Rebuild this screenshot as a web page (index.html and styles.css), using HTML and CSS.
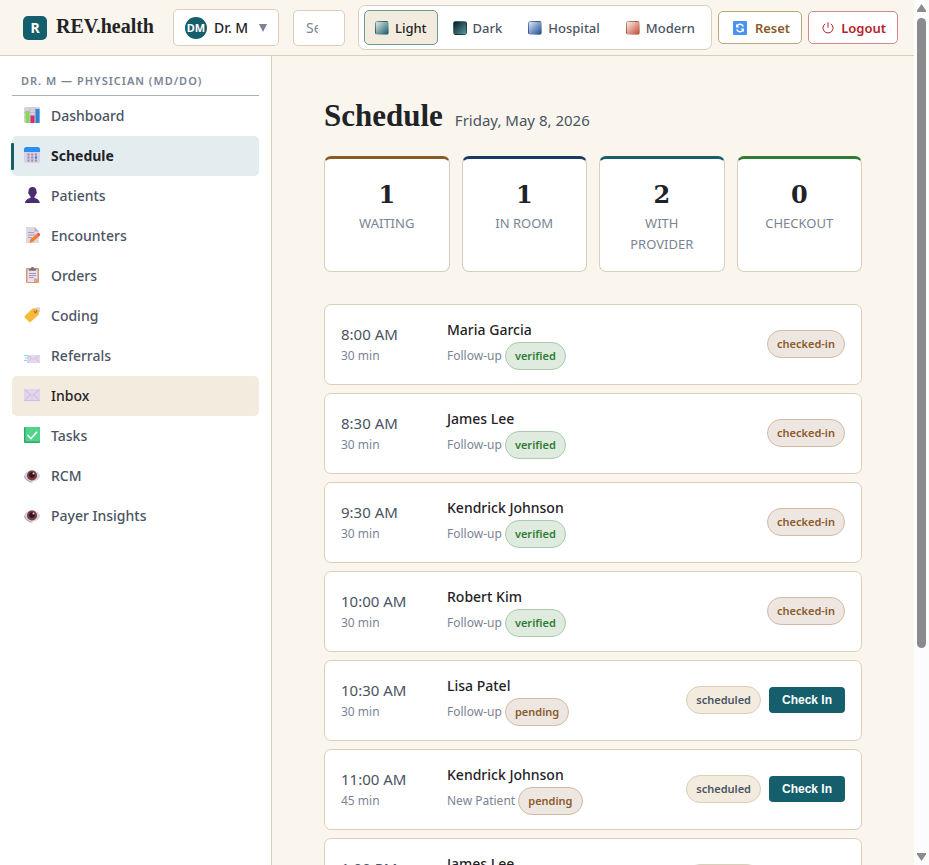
FILE: index.html
```html
<!DOCTYPE html>
<html lang="en">
<head>
    <meta charset="UTF-8">
    <meta name="viewport" content="width=device-width, initial-scale=1">
    <title>REV.health - Schedule</title>
    <link rel="stylesheet" href="styles.css">
</head>
<body>
<div class="viewport">
<div class="app">
    <header class="topbar">
        <a class="brand" href="#"><span class="brand-mark">R</span><span class="brand-name">REV.health</span></a>
        <button class="user-picker" type="button">
            <span class="avatar">DM</span>
            <span>Dr. M</span>
            <svg class="caret" width="8" height="8" viewBox="0 0 8 8"><path d="M0 0h8L4 8z" fill="#7b8494"/></svg>
        </button>
        <input class="search" type="text" placeholder="Search patients" aria-label="Search">
        <div class="themes">
            <button class="theme active" type="button"><span class="swatch light"></span>Light</button>
            <button class="theme" type="button"><span class="swatch dark"></span>Dark</button>
            <button class="theme" type="button"><span class="swatch hospital"></span>Hospital</button>
            <button class="theme" type="button"><span class="swatch modern"></span>Modern</button>
        </div>
        <div class="actions">
            <button class="action reset" type="button">
                <svg width="14" height="14" viewBox="0 0 14 14"><rect width="14" height="14" rx="1" fill="#4795ee"/><path d="M10.3 5.5A3.6 3.6 0 0 0 4 4.9M3.7 8.5a3.6 3.6 0 0 0 6.3.6" fill="none" stroke="#fff" stroke-width="1.5"/><path d="M3 3v3.4h3.4zM11 11V7.6H7.6z" fill="#fff"/></svg>
                Reset
            </button>
            <button class="action logout" type="button">
                <svg width="12" height="12" viewBox="0 0 12 12"><path d="M3.2 1.8a5 5 0 1 0 5.6 0M6 .3v5.4" fill="none" stroke="#b3222b" stroke-width="1"/></svg>
                Logout
            </button>
        </div>
    </header>

    <div class="body">
        <nav class="sidebar">
            <div class="nav-title">Dr. M — Physician (MD/DO)</div>
            <a class="nav-item" href="#">
                <svg width="16" height="16" viewBox="0 0 16 16"><rect width="16" height="16" rx="1.5" fill="#d9d0df"/><path d="M0 5.5h16M0 10.5h16M6 0v16M11 0v16" stroke="#b9afc2" stroke-width=".6"/><rect x="1.5" y="4" width="4" height="12" fill="#86d957"/><rect x="6.5" y="8.5" width="4" height="7.5" fill="#d52b6f"/><rect x="11.5" y="2" width="4" height="14" fill="#2688d9"/></svg>
                Dashboard
            </a>
            <a class="nav-item current" href="#">
                <svg width="16" height="16" viewBox="0 0 16 16"><rect width="16" height="16" rx="2.5" fill="#d8cfe6"/><path d="M0 5V2.5A2.5 2.5 0 0 1 2.5 0h11A2.5 2.5 0 0 1 16 2.5V5z" fill="#2b8ff5"/><path d="M3.5 7.5h9.5M3.5 10.5h9.5M3.5 13.5h9.5" stroke="#958ba3" stroke-width="1.8" stroke-dasharray="2 1.7"/><path d="M11 9.6h2v1.8h-2z" fill="#1b85e8"/></svg>
                Schedule
            </a>
            <a class="nav-item" href="#">
                <svg width="16" height="16" viewBox="0 0 16 16"><path d="M8.5 0c2.7 0 4 1.800 4 4.300 0 .8.5.8.3 1.6-.1.7-.6.9-.8 1.4-.3 1-.9 1.700-1.500 2.200v1.400c2.500.7 5 1.600 5.300 5.100H1c.3-3.500 3-4.400 5.500-5.100V9.500C5.900 9 5.300 8.300 5 7.300c-.2-.5-.7-.7-.8-1.400-.2-.8.3-.8.3-1.600C4.500 1.800 5.800 0 8.500 0z" fill="#4a2c75"/></svg>
                Patients
            </a>
            <a class="nav-item" href="#">
                <svg width="16" height="16" viewBox="0 0 16 16"><path d="M2 0h8.500L15 4.500V16H2z" fill="#ded8e3"/><path d="M10.500 0v4.500H15z" fill="#b8afc4"/><path d="M4 5.500h6M4 8h7M4 10.500h4" stroke="#a99fb3"/><path d="M5.500 15.700l.8-3.200 6-5.200 2.300 2.500-6 5.100z" fill="#f77c24"/><path d="M12.300 7.300l1.400-1.200c1.500-.8 3 .9 2.200 2.400l-1.300 1.300z" fill="#ed5658"/></svg>
                Encounters
            </a>
            <a class="nav-item" href="#">
                <svg width="16" height="16" viewBox="0 0 16 16"><rect x="2" y="1" width="13" height="15" rx="1" fill="#d29a70"/><path d="M3.500 2.500h10v9L10 15H3.500z" fill="#e8e0f1"/><path d="M10 15v-3.500h3.500z" fill="#b6a5c9"/><path d="M10.500 15.500l4-4V15.500z" fill="#f4a050"/><path d="M5 3.700V1.800h2C7 .5 7.500 0 8.500 0s1.500.5 1.500 1.800h2v1.900z" fill="#75717f"/><path d="M5 6.500h7M5 8.500h7M5 10.500h4.500" stroke="#a196ad"/></svg>
                Orders
            </a>
            <a class="nav-item" href="#">
                <svg width="16" height="16" viewBox="0 0 16 16"><path d="M8.500 1.500L13 1l2 2-.3 4.500-8 7.500c-.5.4-1 .4-1.500 0L.7 10.500c-.4-.5-.4-1 0-1.500z" fill="#fbb938"/><circle cx="11.500" cy="4.500" r="1.800" fill="#c96f28"/><path d="M11 4.500C11 1 15.500-.5 16 2.500c.2 1.500-1 2.500-2.500 2.500" fill="none" stroke="#cbc3dc" stroke-width="1.1"/></svg>
                Coding
            </a>
            <a class="nav-item" href="#">
                <svg width="16" height="16" viewBox="0 0 16 16"><rect x="3" y="8" width="13" height="8" rx=".5" fill="#e4d7ee"/><path d="M3.500 8.500l6 4 6-4M3.500 15.500l4-4M15.500 15.500l-4-4" fill="none" stroke="#c9b7da" stroke-width=".7"/><path d="M0 8.500h4M1 11h3M0 13.500h3" stroke="#8bdde3"/></svg>
                Referrals
            </a>
            <a class="nav-item hovered" href="#">
                <svg width="16" height="16" viewBox="0 0 16 16"><rect y="2" width="16" height="12" rx=".7" fill="#e0d3eb"/><path d="M.5 2.500L8 9l7.500-6.500M.5 13.500L6 8M15.500 13.500L10 8" fill="none" stroke="#c8b5da" stroke-width=".8"/><path d="M0 13.600h16" stroke="#cdb4e2" stroke-width=".8"/></svg>
                Inbox
            </a>
            <a class="nav-item" href="#">
                <svg width="16" height="16" viewBox="0 0 16 16"><rect width="16" height="16" rx="1" fill="#2fab69"/><rect x="1.500" width="14.500" height="14.500" rx="1" fill="#50d38a"/><path d="M3.500 8l3.500 3.500L13 4.800" fill="none" stroke="#fff" stroke-width="1.6"/></svg>
                Tasks
            </a>
            <a class="nav-item" href="#">
                <svg width="16" height="16" viewBox="0 0 16 16"><path d="M0 9c2-8 14-8 16 0-2 7.500-14 7.500-16 0z" fill="#d9d3df"/><path d="M.3 9c2 4.500 5 6 8 6" fill="none" stroke="#b6a3c9" stroke-width="1.2"/><circle cx="8" cy="8.500" r="5" fill="#7b3d3c"/><circle cx="8" cy="8" r="2.800" fill="#2d1725"/><circle cx="9.500" cy="6.500" r="1" fill="#e3cfd6"/></svg>
                RCM
            </a>
            <a class="nav-item" href="#">
                <svg width="16" height="16" viewBox="0 0 16 16"><path d="M0 9c2-8 14-8 16 0-2 7.500-14 7.500-16 0z" fill="#d9d3df"/><path d="M.3 9c2 4.500 5 6 8 6" fill="none" stroke="#b6a3c9" stroke-width="1.2"/><circle cx="8" cy="8.500" r="5" fill="#7b3d3c"/><circle cx="8" cy="8" r="2.800" fill="#2d1725"/><circle cx="9.500" cy="6.500" r="1" fill="#e3cfd6"/></svg>
                Payer Insights
            </a>
        </nav>

        <main class="content">
            <div class="page-head">
                <h1>Schedule</h1>
                <span class="date">Friday, May 8, 2026</span>
            </div>

            <section class="stats">
                <div class="stat waiting"><div class="stat-value">1</div><div class="stat-label">Waiting</div></div>
                <div class="stat in-room"><div class="stat-value">1</div><div class="stat-label">In Room</div></div>
                <div class="stat provider"><div class="stat-value">2</div><div class="stat-label">With Provider</div></div>
                <div class="stat checkout"><div class="stat-value">0</div><div class="stat-label">Checkout</div></div>
            </section>

            <section class="appointments">
                <article class="appt">
                    <div class="when"><div class="time">8:00 AM</div><div class="length">30 min</div></div>
                    <div class="who"><div class="name">Maria Garcia</div><div class="visit">Follow-up <span class="badge green">verified</span></div></div>
                    <span class="badge brown">checked-in</span>
                </article>
                <article class="appt">
                    <div class="when"><div class="time">8:30 AM</div><div class="length">30 min</div></div>
                    <div class="who"><div class="name">James Lee</div><div class="visit">Follow-up <span class="badge green">verified</span></div></div>
                    <span class="badge brown">checked-in</span>
                </article>
                <article class="appt">
                    <div class="when"><div class="time">9:30 AM</div><div class="length">30 min</div></div>
                    <div class="who"><div class="name">Kendrick Johnson</div><div class="visit">Follow-up <span class="badge green">verified</span></div></div>
                    <span class="badge brown">checked-in</span>
                </article>
                <article class="appt">
                    <div class="when"><div class="time">10:00 AM</div><div class="length">30 min</div></div>
                    <div class="who"><div class="name">Robert Kim</div><div class="visit">Follow-up <span class="badge green">verified</span></div></div>
                    <span class="badge brown">checked-in</span>
                </article>
                <article class="appt">
                    <div class="when"><div class="time">10:30 AM</div><div class="length">30 min</div></div>
                    <div class="who"><div class="name">Lisa Patel</div><div class="visit">Follow-up <span class="badge brown">pending</span></div></div>
                    <span class="badge sand">scheduled</span>
                    <button class="check-in" type="button">Check In</button>
                </article>
                <article class="appt">
                    <div class="when"><div class="time">11:00 AM</div><div class="length">45 min</div></div>
                    <div class="who"><div class="name">Kendrick Johnson</div><div class="visit">New Patient <span class="badge brown">pending</span></div></div>
                    <span class="badge sand">scheduled</span>
                    <button class="check-in" type="button">Check In</button>
                </article>
                <article class="appt">
                    <div class="when"><div class="time">1:00 PM</div><div class="length">30 min</div></div>
                    <div class="who"><div class="name">James Lee</div><div class="visit">Follow-up <span class="badge brown">pending</span></div></div>
                    <span class="badge sand">scheduled</span>
                    <button class="check-in" type="button">Check In</button>
                </article>
            </section>
        </main>
    </div>
</div>

<div class="scrollbar">
    <svg width="9" height="8" viewBox="0 0 9 8"><path d="M4.500 0L9 6.500V8H0V6.500z" fill="#8b8b8b"/></svg>
    <div class="track"><div class="thumb"></div></div>
    <svg width="9" height="8" viewBox="0 0 9 8"><path d="M4.500 8L9 1.500V0H0v1.500z" fill="#8b8b8b"/></svg>
</div>
</div>
</body>
</html>
```
FILE: styles.css
```css
:root {
    --bg: #faf6ee;
    --sand: #f3ecde;
    --border: #d9cfbb;
    --teal: #155e6b;
    --ink: #1f2328;
    --text: #4a5463;
    --muted: #7b8494;
    --brown: #8b5a2b;
    --serif: "Liberation Serif", serif;
}

* {
    box-sizing: border-box;
}

body {
    margin: 0;
    background: var(--bg);
    color: var(--ink);
    font-family: "Noto Sans", sans-serif;
    font-size: 14px;
}

button,
input {
    font: inherit;
}

button {
    cursor: pointer;
}

a {
    color: inherit;
    text-decoration: none;
}

.viewport {
    display: flex;
    height: 100vh;
    overflow: hidden;
}

.app {
    flex: 1;
    min-width: 0;
    display: flex;
    flex-direction: column;
}

/* Top bar */
.topbar {
    display: flex;
    align-items: center;
    flex: none;
    height: 56px;
    padding: 0 16px 0 23px;
    border-bottom: 1px solid var(--border);
}

.brand {
    display: flex;
    align-items: center;
    gap: 9px;
    margin-right: 19px;
}

.brand-mark {
    width: 24px;
    height: 24px;
    border-radius: 5px;
    background: var(--teal);
    color: #fff;
    font-size: 14px;
    font-weight: 700;
    line-height: 24px;
    text-align: center;
}

.brand-name {
    padding-bottom: 4px;
    font-family: var(--serif);
    font-size: 20px;
    font-weight: 700;
    line-height: 28px;
}

.user-picker {
    display: flex;
    align-items: center;
    gap: 7px;
    width: 106px;
    height: 37px;
    margin-right: 14px;
    padding: 0 11px;
    border: 1px solid var(--border);
    border-radius: 5px;
    background: #fff;
    color: var(--ink);
    font-weight: 500;
    white-space: nowrap;
}

.avatar {
    width: 22px;
    height: 22px;
    flex: none;
    border-radius: 50%;
    background: var(--teal);
    color: #fff;
    font-size: 11px;
    font-weight: 700;
    line-height: 22px;
    text-align: center;
}

.caret {
    flex: none;
    margin-left: auto;
}

.search {
    flex: 1;
    width: 0;
    min-width: 40px;
    height: 36px;
    margin-right: 13px;
    padding: 0 26px 0 12px;
    border: 1px solid var(--border);
    border-radius: 5px;
    background: #fff;
    outline: none;
}

.search::placeholder {
    color: var(--muted);
}

.themes {
    display: flex;
    flex: none;
    gap: 4px;
    margin-right: 6px;
    padding: 4px 5px;
    border: 1px solid var(--border);
    border-radius: 7px;
    background: #fff;
}

.theme {
    display: flex;
    align-items: center;
    gap: 6px;
    height: 35px;
    padding: 0 10px;
    border: 1px solid transparent;
    border-radius: 5px;
    background: none;
    color: var(--text);
    font-size: 13px;
    font-weight: 500;
}

.theme.active {
    border-color: #6f9994;
    background: var(--sand);
    color: var(--ink);
}

.swatch {
    width: 14px;
    height: 14px;
    border: 1px solid rgba(31, 35, 40, 0.15);
    border-radius: 3px;
}

.light {
    background: linear-gradient(135deg, #e4e9e5, #155e6b);
}

.dark {
    background: linear-gradient(135deg, #101820, #4f9ca3);
}

.hospital {
    background: linear-gradient(135deg, #dfe8f5, #1c4d96);
}

.modern {
    background: linear-gradient(135deg, #faf0ea, #c54b32);
}

.actions {
    display: flex;
    flex: none;
    gap: 6px;
}

.action {
    display: flex;
    align-items: center;
    gap: 8px;
    height: 33px;
    padding: 0 11px 0 14px;
    border: 1px solid #bda77f;
    border-radius: 5px;
    background: #fff;
    color: var(--brown);
    font-size: 13px;
    font-weight: 600;
}

.logout {
    padding: 0 11px 0 13px;
    gap: 7px;
    border-color: #d18a85;
    color: #b3222b;
}

/* Sidebar */
.body {
    display: flex;
    flex: 1;
    min-height: 0;
}

.sidebar {
    flex: none;
    width: 272px;
    padding: 12px;
    border-right: 1px solid var(--border);
    background: #fff;
}

.nav-title {
    padding: 5px 9px 6px;
    border-bottom: 1px solid #a5b5ae;
    color: var(--muted);
    font-size: 11px;
    font-weight: 600;
    line-height: 16px;
    letter-spacing: 1px;
    text-transform: uppercase;
}

.nav-item {
    display: flex;
    align-items: center;
    gap: 11px;
    height: 40px;
    padding: 0 12px 2px;
    border-radius: 5px;
    color: var(--text);
    font-weight: 500;
}

.nav-item.current {
    position: relative;
    background: #e3ecee;
    color: var(--ink);
    font-weight: 700;
}

.nav-item.current::before {
    content: "";
    position: absolute;
    top: 7px;
    bottom: 6px;
    left: -1px;
    width: 3px;
    border-radius: 1px;
    background: var(--teal);
}

.nav-item.hovered {
    background: var(--sand);
    color: var(--ink);
}

/* Schedule page */
.content {
    flex: 1;
    min-width: 0;
    padding: 40px 52px;
    overflow: hidden;
}

.page-head {
    display: flex;
    align-items: baseline;
    gap: 12px;
    margin-bottom: 20px;
}

h1 {
    margin: 0;
    font-family: var(--serif);
    font-size: 31px;
    font-weight: 700;
    line-height: 40px;
}

.date {
    color: var(--text);
    font-size: 15px;
}

.stats {
    display: grid;
    grid-template-columns: repeat(4, 1fr);
    gap: 12px;
    margin-bottom: 32px;
}

.stat {
    padding: 20px 16px 16px;
    border: 1px solid var(--border);
    border-top: 3px solid var(--teal);
    border-radius: 7px;
    background: #fff;
    text-align: center;
}

.stat.waiting {
    border-top-color: var(--brown);
}

.stat.in-room {
    border-top-color: #1a3a63;
}

.stat.checkout {
    border-top-color: #2e7d32;
}

.stat-value {
    margin-bottom: 3px;
    font-family: "DejaVu Serif", serif;
    font-size: 24px;
    font-weight: 700;
    line-height: 31px;
}

.stat-label {
    color: var(--muted);
    font-size: 13px;
    line-height: 21px;
    text-transform: uppercase;
}

.appointments {
    display: flex;
    flex-direction: column;
    gap: 8px;
}

.appt {
    display: flex;
    align-items: center;
    gap: 8px;
    padding: 13px 16px 14px;
    border: 1px solid var(--border);
    border-radius: 7px;
    background: #fff;
}

.when {
    width: 98px;
}

.time {
    color: var(--text);
    font-size: 15px;
    line-height: 23px;
}

.length {
    color: var(--muted);
    font-size: 12px;
    line-height: 20px;
}

.who {
    flex: 1;
}

.name {
    font-weight: 500;
    line-height: 24px;
}

.visit {
    color: var(--muted);
    font-size: 12px;
    line-height: 28px;
}

.badge {
    display: inline-block;
    height: 28px;
    padding: 0 9px;
    border: 1px solid;
    border-radius: 14px;
    font-size: 11px;
    font-weight: 600;
    line-height: 26px;
}

.badge.green {
    border-color: #a9cbab;
    background: #e0ebe0;
    color: #2e7d32;
}

.badge.brown {
    border-color: #d2bba6;
    background: #eee6e0;
    color: var(--brown);
}

.badge.sand {
    border-color: var(--border);
    background: var(--sand);
    color: var(--text);
}

.check-in {
    height: 26px;
    padding: 0 13px;
    border: 0;
    border-radius: 4px;
    background: var(--teal);
    color: #fff;
    font-family: "Liberation Sans", sans-serif;
    font-size: 12px;
    font-weight: 700;
}

/* Scrollbar */
.scrollbar {
    display: flex;
    flex: none;
    flex-direction: column;
    align-items: center;
    gap: 6px;
    width: 15px;
    padding: 4px 0;
    background: #fcfcfc;
}

.track {
    flex: 1;
    width: 9px;
}

.thumb {
    height: 76%;
    border-radius: 5px;
    background: #8b8b8b;
}
```
